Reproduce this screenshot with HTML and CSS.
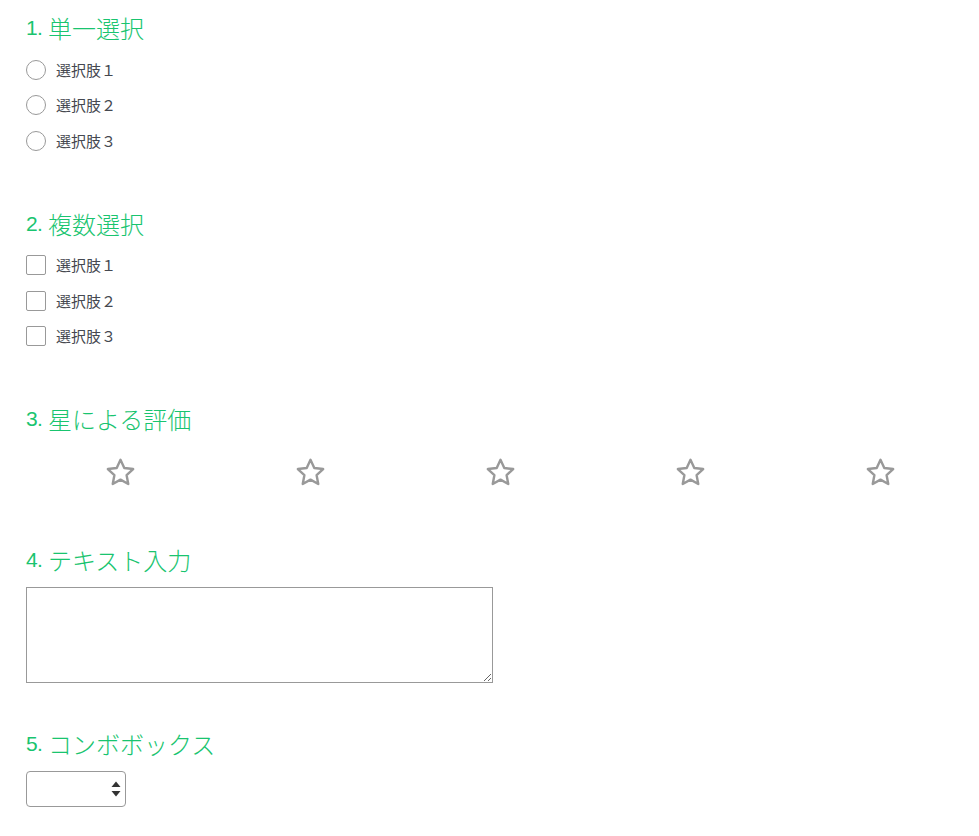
FILE: index.html
```html
<!DOCTYPE html>
<html lang="ja">
<head>
<meta charset="utf-8">
<title>アンケート</title>
<link rel="stylesheet" href="styles.css">
</head>
<body>
<main class="form">
  <section class="q q-radio">
    <h2 class="q-title"><span class="q-num">1.</span>単一選択</h2>
    <div class="options">
      <label class="opt"><input type="radio" name="r" class="radio"><span>選択肢１</span></label>
      <label class="opt"><input type="radio" name="r" class="radio"><span>選択肢２</span></label>
      <label class="opt"><input type="radio" name="r" class="radio"><span>選択肢３</span></label>
    </div>
  </section>
  <section class="q q-check">
    <h2 class="q-title"><span class="q-num">2.</span>複数選択</h2>
    <div class="options">
      <label class="opt"><input type="checkbox" class="check"><span>選択肢１</span></label>
      <label class="opt"><input type="checkbox" class="check"><span>選択肢２</span></label>
      <label class="opt"><input type="checkbox" class="check"><span>選択肢３</span></label>
    </div>
  </section>
  <section class="q q-star">
    <h2 class="q-title"><span class="q-num">3.</span>星による評価</h2>
    <div class="stars">
      <span class="star"><svg viewBox="0 0 24 24" width="33" height="33"><path d="M12 2.8l2.75 5.9 6.45.8-4.75 4.45 1.2 6.4L12 17.2l-5.65 3.15 1.2-6.4L2.8 9.5l6.45-.8z"/></svg></span>
      <span class="star"><svg viewBox="0 0 24 24" width="33" height="33"><path d="M12 2.8l2.75 5.9 6.45.8-4.75 4.45 1.2 6.4L12 17.2l-5.65 3.15 1.2-6.4L2.8 9.5l6.45-.8z"/></svg></span>
      <span class="star"><svg viewBox="0 0 24 24" width="33" height="33"><path d="M12 2.8l2.75 5.9 6.45.8-4.75 4.45 1.2 6.4L12 17.2l-5.65 3.15 1.2-6.4L2.8 9.5l6.45-.8z"/></svg></span>
      <span class="star"><svg viewBox="0 0 24 24" width="33" height="33"><path d="M12 2.8l2.75 5.9 6.45.8-4.75 4.45 1.2 6.4L12 17.2l-5.65 3.15 1.2-6.4L2.8 9.5l6.45-.8z"/></svg></span>
      <span class="star"><svg viewBox="0 0 24 24" width="33" height="33"><path d="M12 2.8l2.75 5.9 6.45.8-4.75 4.45 1.2 6.4L12 17.2l-5.65 3.15 1.2-6.4L2.8 9.5l6.45-.8z"/></svg></span>
    </div>
  </section>
  <section class="q q-text">
    <h2 class="q-title"><span class="q-num">4.</span>テキスト入力</h2>
    <textarea class="textarea"></textarea>
  </section>
  <section class="q q-select">
    <h2 class="q-title"><span class="q-num">5.</span>コンボボックス</h2>
    <div class="select-wrap">
      <select class="select"><option></option></select>
      <svg class="select-arrows" viewBox="0 0 10 16" width="10" height="16"><path d="M5 0.5L9.5 6H0.5z"/><path d="M0.5 10H9.5L5 15.5z"/></svg>
    </div>
  </section>
</main>
</body>
</html>
```

FILE: styles.css
```css
html, body {
  margin: 0;
  padding: 0;
  background: #fff;
}
body {
  font-family: "Noto Sans CJK JP", "Noto Sans", sans-serif;
  color: #444;
}
.form {
  padding: 15px 26px 20px 26px;
}
.q-title {
  margin: 0;
  height: 30px;
  box-sizing: border-box;
  padding-bottom: 4px;
  line-height: 26px;
  font-size: 24px;
  font-weight: 300;
  color: #19c46f;
  font-family: "Noto Sans CJK JP", sans-serif;
  white-space: nowrap;
  display: flex;
  align-items: center;
}
.q-num {
  font-family: "Liberation Sans", sans-serif;
  font-size: 21px;
  letter-spacing: -0.8px;
  margin-right: 6px;
}
.q-radio, .q-check {
  margin-bottom: 52px;
}
.options {
  margin-top: 7px;
  display: flex;
  flex-direction: column;
}
.opt {
  height: 35.5px;
  display: flex;
  align-items: center;
  gap: 10px;
  font-size: 15px;
  color: #454850;
}
.opt span {
  line-height: 20px;
}
.radio, .check {
  appearance: none;
  -webkit-appearance: none;
  margin: 0;
  width: 20px;
  height: 20px;
  border: 1px solid #999;
  background: #fff;
  flex: none;
}
.radio {
  border-radius: 50%;
}
.check {
  border-radius: 2px;
}
.q-star {
  margin-bottom: 61px;
}
.stars {
  margin-top: 20px;
  margin-left: -1px;
  display: grid;
  grid-template-columns: repeat(5, 190px);
  height: 30px;
}
.star {
  display: flex;
  justify-content: center;
  align-items: center;
}
.star svg {
  display: block;
}
.star svg path {
  fill: none;
  stroke: #999;
  stroke-width: 1.75;
  stroke-linejoin: round;
}
.q-text {
  margin-bottom: 48px;
}
.textarea {
  display: block;
  margin-top: 10px;
  width: 467px;
  height: 96px;
  box-sizing: border-box;
  border: 1px solid #999;
  border-radius: 0;
  padding: 4px;
  font: inherit;
}
.select-wrap {
  position: relative;
  margin-top: 10px;
  width: 100px;
  height: 36px;
}
.select {
  appearance: none;
  -webkit-appearance: none;
  display: block;
  width: 100px;
  height: 36px;
  box-sizing: border-box;
  border: 1px solid #999;
  border-radius: 4px;
  background: #fff;
  margin: 0;
}
.select-arrows {
  position: absolute;
  left: 85px;
  top: 10px;
  pointer-events: none;
}
.select-arrows path {
  fill: #333;
}
```
